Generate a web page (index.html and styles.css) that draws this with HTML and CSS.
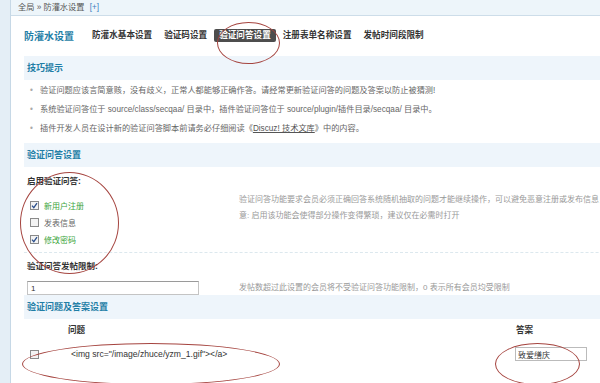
FILE: index.html
```html
<!DOCTYPE html>
<html lang="zh-CN">
<head>
  <meta charset="UTF-8" />
  <title>防灌水设置</title>
  <link rel="stylesheet" href="styles.css">
</head>
<body>
  <div class="frame">
    <div class="side"></div>
    <div class="main">
      <div class="crumb">全局 &raquo; 防灌水设置 <span class="add">[+]</span></div>

      <div class="content">
        <!-- 标题和选项卡 -->
        <div class="titlebar">
          <h1>防灌水设置</h1>
          <ul class="tabs">
            <li>防灌水基本设置</li>
            <li>验证码设置</li>
            <li class="current">验证问答设置</li>
            <li>注册表单名称设置</li>
            <li>发帖时间段限制</li>
          </ul>
        </div>

        <div class="panel">
          <h3 class="sec">技巧提示</h3>
          <ul class="tips">
            <li>验证问题应该言简意赅，没有歧义，正常人都能够正确作答。请经常更新验证问答的问题及答案以防止被猜测!</li>
            <li>系统验证问答位于 source/class/secqaa/ 目录中，插件验证问答位于 source/plugin/插件目录/secqaa/ 目录中。</li>
            <li>插件开发人员在设计新的验证问答脚本前请务必仔细阅读《 <a class="doc">Discuz! 技术文库</a> 》中的内容。</li>
          </ul>

          <h3 class="sec">验证问答设置</h3>
          <div class="label">启用验证问答:</div>
          <div class="row row-enable">
            <div class="field-col checks">
              <div class="check on"><span class="box"><svg width="7" height="7" viewBox="0 0 7 7"><polyline points="1,3.6 2.8,5.6 6,1.2" fill="none" stroke="#2c4f8c" stroke-width="1.3"/></svg></span>新用户注册</div>
              <div class="check"><span class="box"></span>发表信息</div>
              <div class="check on"><span class="box"><svg width="7" height="7" viewBox="0 0 7 7"><polyline points="1,3.6 2.8,5.6 6,1.2" fill="none" stroke="#2c4f8c" stroke-width="1.3"/></svg></span>修改密码</div>
            </div>
            <div class="desc">
              <div>验证问答功能要求会员必须正确回答系统随机抽取的问题才能继续操作，可以避免恶意注册或发布信息，注</div>
              <div>意: 启用该功能会使得部分操作变得繁琐，建议仅在必需时打开</div>
            </div>
          </div>

          <div class="label label-limit">验证问答发帖限制:</div>
          <div class="row">
            <div class="field-col">
              <input class="text-input" type="text" value="1">
            </div>
            <div class="desc desc-line">发帖数超过此设置的会员将不受验证问答功能限制，0 表示所有会员均受限制</div>
          </div>

          <h3 class="sec sec-qa">验证问题及答案设置</h3>
          <div class="qa qa-head">
            <span></span>
            <span>问题</span>
            <span class="a-col">答案</span>
          </div>
          <div class="qa qa-row">
            <span class="box box-row"></span>
            <span class="q-text">&lt;img src="/image/zhuce/yzm_1.gif"&gt;&lt;/a&gt;</span>
            <input class="answer" type="text" value="致爱缮庆">
          </div>
        </div>
      </div>
    </div>
  </div>

  <!-- 截图上的红圈标注 -->
  <div class="mark mark-tab"></div>
  <div class="mark mark-checks"></div>
  <div class="mark mark-question"></div>
  <div class="mark mark-answer"></div>
</body>
</html>
```

FILE: styles.css
```css
body {
  margin: 0;
  width: 600px;
  height: 383px;
  overflow: hidden;
  position: relative;
  background: #fff;
  color: #333;
  font-family: "Liberation Sans", "Noto Sans CJK SC", sans-serif;
}
.frame {
  display: flex;
  width: 780px;
  min-height: 383px;
}
.side {
  flex: none;
  width: 10px;
  background: #e4eef6;
  border-right: 1px solid #c6d8e6;
}
.main {
  flex: 1;
}
.crumb {
  height: 15px;
  line-height: 15px;
  padding-left: 7px;
  background: #edf5fa;
  border-bottom: 1px solid #cddde9;
  font-size: 8.2px;
  color: #555;
}
.crumb .add {
  margin-left: 3px;
  color: #3b7dc0;
}
.content {
  padding-left: 13px;
}
.titlebar {
  display: flex;
  align-items: center;
  height: 18px;
  margin: 10px 0 12px;
}
h1 {
  margin: 0;
  font-size: 10px;
  color: #1f7ea6;
}
.tabs {
  display: flex;
  gap: 2px;
  list-style: none;
  margin: 0 0 0 13px;
  padding: 0;
}
.tabs li {
  padding: 0 5px;
  line-height: 13px;
  font-size: 8.6px;
  font-weight: bold;
  color: #333;
}
.tabs .current {
  background: #4d4d4d;
  color: #fff;
  border-radius: 2px;
}
.panel {
  width: 740px;
}
.sec {
  margin: 0;
  height: 24px;
  line-height: 25px;
  padding-left: 3px;
  background: #eef5fb;
  font-size: 9px;
  color: #1f7ea6;
}
.tips {
  list-style: none;
  margin: 0 0 5px;
  padding: 1px 0 0 6px;
  font-size: 8.2px;
  color: #666;
}
.tips li {
  display: flex;
  line-height: 19px;
}
.tips li::before {
  content: "•";
  width: 10px;
  flex: none;
  color: #aaa;
}
.tips .doc {
  color: #555;
  text-decoration: underline;
}
.label {
  margin: 7px 0 2px;
  padding-left: 3px;
  line-height: 14px;
  font-size: 8.5px;
  font-weight: bold;
}
.label-limit {
  margin: 6px 0 8px;
}
.row {
  display: flex;
  padding-left: 3px;
}
.row-enable {
  padding-bottom: 4px;
  border-bottom: 1px dashed #dce8ee;
}
.field-col {
  flex: none;
  width: 212px;
}
.checks {
  box-sizing: border-box;
  padding: 7px 0 0 3px;
}
.check {
  display: flex;
  align-items: center;
  height: 17px;
  font-size: 8px;
  color: #666;
}
.check.on {
  color: #3aa53a;
}
.box {
  display: flex;
  width: 7px;
  height: 7px;
  margin-right: 5px;
  border: 1px solid #8a8a8a;
  background: #f3f3f3;
}
.desc {
  padding-top: 2px;
  line-height: 16px;
  font-size: 8px;
  color: #999;
  white-space: nowrap;
}
.desc-line {
  padding-top: 0;
  line-height: 14px;
}
.text-input {
  display: block;
  box-sizing: border-box;
  width: 172px;
  height: 14px;
  margin: 0;
  padding: 0 3px;
  border: 1px solid #c4c4c4;
  border-top-color: #9a9a9a;
  font: 8px "Liberation Sans", sans-serif;
  color: #333;
}
.qa {
  display: grid;
  grid-template-columns: 44px 447px 100px;
  align-items: center;
}
.qa-head {
  margin-top: 4px;
  line-height: 14px;
  font-size: 8.6px;
  font-weight: bold;
}
.qa-head .a-col {
  padding-left: 1px;
}
.qa-row {
  height: 14px;
  margin-top: 10px;
}
.box-row {
  margin-left: 6px;
}
.q-text {
  padding-left: 3px;
  font-size: 8.6px;
  color: #333;
}
.answer {
  box-sizing: border-box;
  width: 72px;
  height: 14px;
  margin: 0;
  padding: 0 2px;
  border: 1px solid #bbb;
  font: 8px "Liberation Sans", "Noto Sans CJK SC", sans-serif;
  color: #333;
}
.mark {
  position: absolute;
  border: 1px solid #a5443f;
  border-radius: 50%;
  pointer-events: none;
}
.mark-tab {
  left: 217px;
  top: 22px;
  width: 61px;
  height: 40px;
}
.mark-checks {
  left: 20px;
  top: 172px;
  width: 97px;
  height: 100px;
}
.mark-question {
  left: 22px;
  top: 343px;
  width: 256px;
  height: 40px;
}
.mark-answer {
  left: 495px;
  top: 343px;
  width: 83px;
  height: 40px;
}
```
